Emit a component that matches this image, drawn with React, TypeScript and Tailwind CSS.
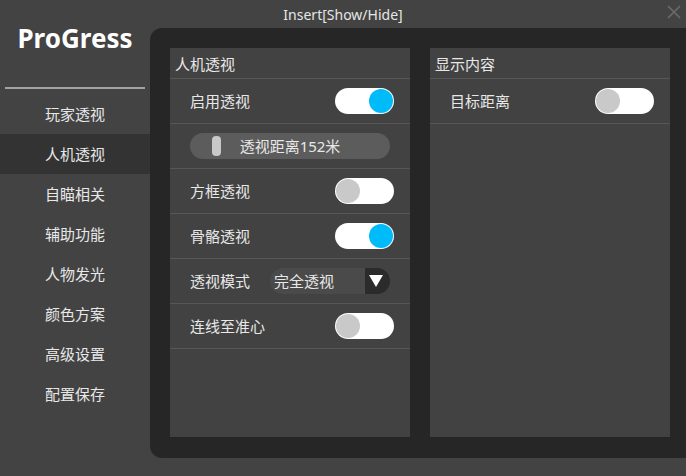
import React from "react";

const font = { fontFamily: '"Noto Sans", "Noto Sans CJK SC", sans-serif' };

const menu = ["玩家透视", "人机透视", "自瞄相关", "辅助功能", "人物发光", "颜色方案", "高级设置", "配置保存"];

const Toggle = ({ on }: { on: boolean }) => (
  <div className={`w-[59px] h-[26px] rounded-full bg-white flex items-center px-[1px] ${on ? "justify-end" : "justify-start"}`}>
    <div className={`w-[24px] h-[24px] rounded-full ${on ? "bg-[#00bbf9]" : "bg-[#c9c9c9]"}`} />
  </div>
);

const Row = ({ children }: { children: React.ReactNode }) => (
  <div className="h-[45px] border-b border-[#575757] flex items-center justify-between pl-[20px] pr-[16px]">
    {children}
  </div>
);

export default function App() {
  return (
    <div className="relative w-[686px] h-[476px] bg-[#434343] text-[#e8e8e8] overflow-hidden" style={font}>
      {/* window chrome */}
      <div className="absolute top-0 left-0 w-full h-[28px] flex items-center justify-center text-[14px] text-[#e6e6e6]">
        Insert[Show/Hide]
      </div>
      <svg className="absolute top-[5px] left-[667px]" width="14" height="14" viewBox="0 0 14 14">
        <path d="M1 1 L13 13 M13 1 L1 13" stroke="#6a6a6a" strokeWidth="1.6" />
      </svg>

      <div className="flex h-full">
        {/* sidebar */}
        <div className="w-[150px] shrink-0 flex flex-col">
          <div className="h-[87px] flex items-center justify-center pb-[11px] text-[26px] font-bold text-white">
            ProGress
          </div>
          <div className="mx-[5px] h-[2px] bg-[#a3a3a3]" />
          <div className="mt-[5px] flex flex-col">
            {menu.map((m) => (
              <div
                key={m}
                className={`h-[40px] flex items-center justify-center text-[15px] ${m === "人机透视" ? "bg-[#333333]" : ""}`}
              >
                {m}
              </div>
            ))}
          </div>
        </div>

        {/* main */}
        <div className="flex-1 flex flex-col pt-[28px] pb-[18px]">
          <div className="flex-1 bg-[#262626] rounded-tl-[12px] rounded-bl-[12px] flex gap-[20px] pl-[20px] pt-[20px] pb-[21px]">
            {/* left panel */}
            <div className="w-[240px] bg-[#424242] flex flex-col">
              <div className="h-[31px] border-b border-[#575757] flex items-end pb-[3px] pl-[5px] text-[15px]">人机透视</div>
              <Row>
                <span className="text-[15px]">启用透视</span>
                <Toggle on />
              </Row>
              <div className="h-[45px] border-b border-[#575757] flex items-center pl-[20px] pr-[20px]">
                <div className="relative w-[200px] h-[26px] rounded-full bg-[#5c5c5c] flex items-center justify-center text-[15px]">
                  <div className="absolute left-[22px] top-[3px] w-[9px] h-[20px] rounded-[4px] bg-[#c8c8c8]" />
                  透视距离152米
                </div>
              </div>
              <Row>
                <span className="text-[15px]">方框透视</span>
                <Toggle on={false} />
              </Row>
              <Row>
                <span className="text-[15px]">骨骼透视</span>
                <Toggle on />
              </Row>
              <div className="h-[45px] border-b border-[#575757] flex items-center pl-[20px] pr-[20px]">
                <span className="text-[15px] w-[80px]">透视模式</span>
                <div className="flex h-[26px] w-[120px] rounded-full overflow-hidden">
                  <div className="flex-1 bg-[#4a4a4a] flex items-center pl-[4px] text-[15px]">完全透视</div>
                  <div className="w-[25px] bg-[#2b2b2b] flex items-center justify-start pl-[4px]">
                    <svg width="14" height="12" viewBox="0 0 14 12">
                      <path d="M0 0 H14 L7 12 Z" fill="#ffffff" />
                    </svg>
                  </div>
                </div>
              </div>
              <Row>
                <span className="text-[15px]">连线至准心</span>
                <Toggle on={false} />
              </Row>
            </div>

            {/* right panel */}
            <div className="w-[240px] bg-[#424242] flex flex-col">
              <div className="h-[31px] border-b border-[#575757] flex items-end pb-[3px] pl-[5px] text-[15px]">显示内容</div>
              <Row>
                <span className="text-[15px]">目标距离</span>
                <Toggle on={false} />
              </Row>
            </div>
          </div>
        </div>
      </div>
    </div>
  );
}
